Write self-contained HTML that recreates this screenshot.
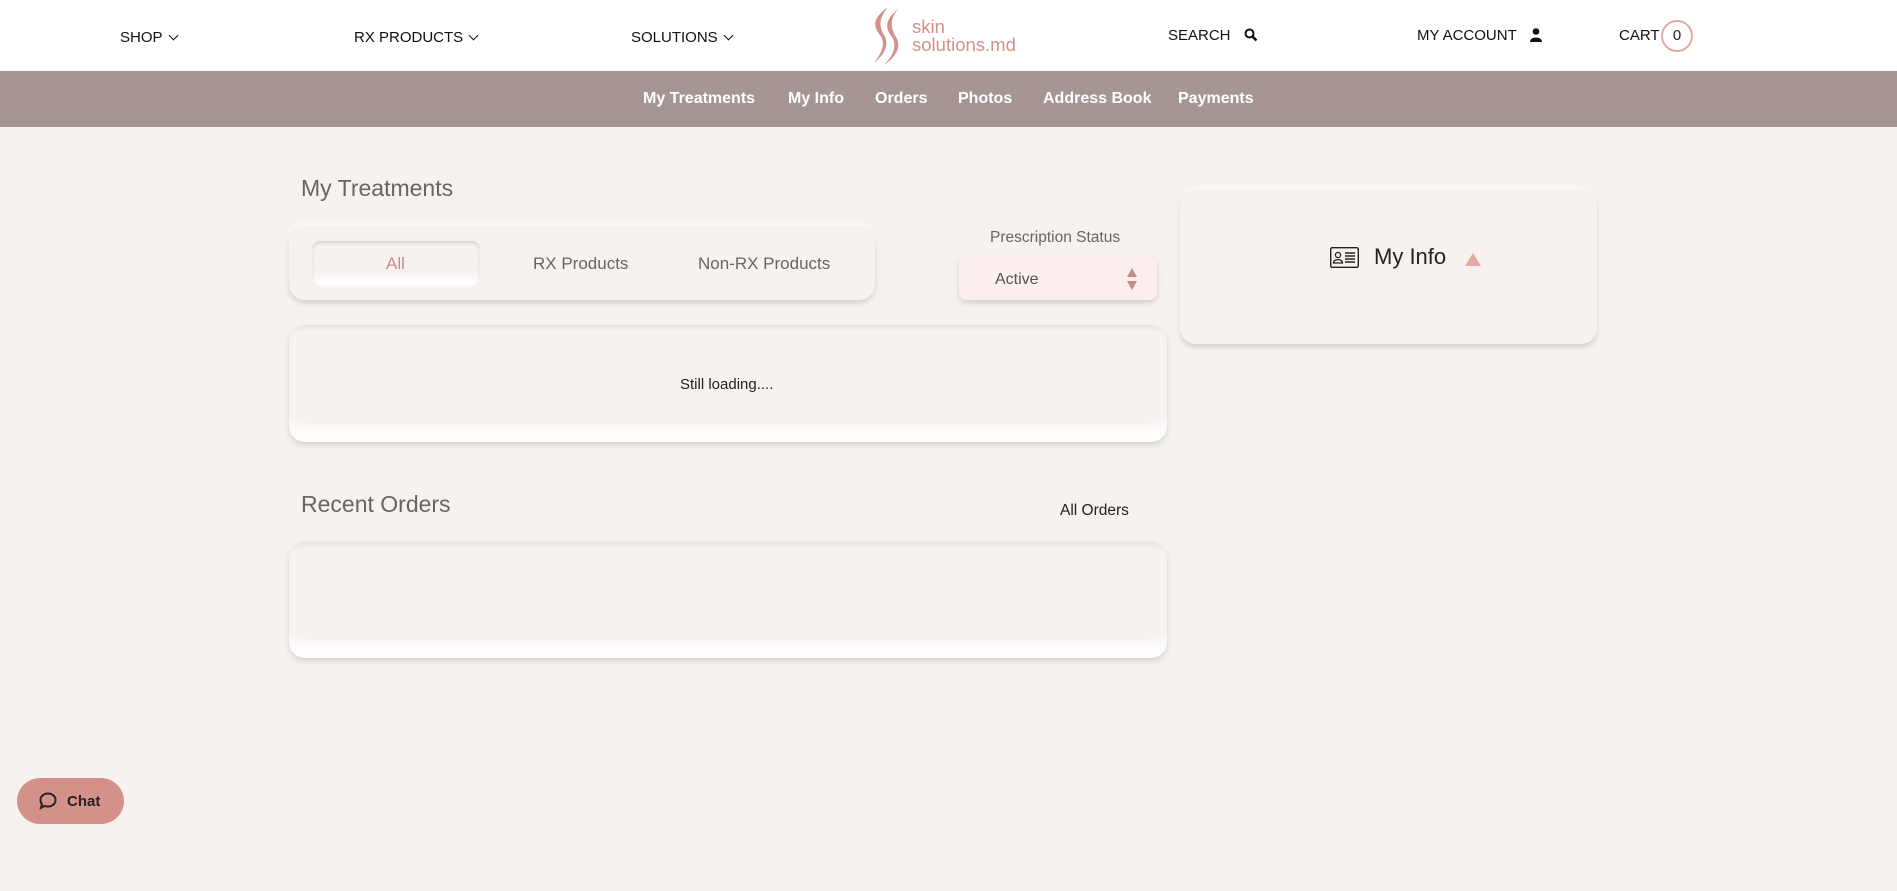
<!DOCTYPE html>
<html><head><meta charset="utf-8"><style>
*{margin:0;padding:0;box-sizing:border-box}
body{width:1897px;height:891px;overflow:hidden;background:#f7f1f0;font-family:"Liberation Sans",sans-serif;position:relative;color:#222}
.a{position:absolute;white-space:nowrap}
.hdr{position:absolute;left:0;top:0;width:1897px;height:71px;background:#fff}
.nav{font-size:15px;color:#111;top:29px}
.sub{position:absolute;left:0;top:71px;width:1897px;height:56px;background:#a69693}
.sub span{position:absolute;top:19px;color:#fff;font-size:16px;font-weight:bold;white-space:nowrap}
.box{position:absolute;border-radius:16px;background:#f7f1f0;box-shadow:0 3px 6px rgba(0,0,0,.13),inset 0 -14px 14px rgba(255,255,255,.9),inset 0 3px 4px rgba(0,0,0,.06)}
.chev{display:inline-block;width:7px;height:7px;border-right:1.8px solid #111;border-bottom:1.8px solid #111;transform:rotate(45deg);margin-left:7px;position:relative;top:-3px}
</style></head><body>
<div class="hdr"></div>
<div class="a nav" style="left:120px">SHOP<span class="chev"></span></div>
<div class="a nav" style="left:354px">RX PRODUCTS<span class="chev"></span></div>
<div class="a nav" style="left:631px">SOLUTIONS<span class="chev"></span></div>
<svg class="a" style="left:866px;top:5px" width="36" height="62" viewBox="0 0 36 62"><path d="M22 2 C8 12 6 20 14 30 C20 38 16 48 8 58 C18 50 24 40 18 30 C12 20 14 12 22 2Z" fill="#d4918a"/><path d="M32 4 C20 14 18 22 26 32 C31 40 28 50 18 60 C30 52 36 42 30 32 C24 22 24 14 32 4Z" fill="#d4918a"/></svg>
<div class="a" style="left:912px;top:18px;font-size:18.5px;color:#d4918a;line-height:18px">skin<br>solutions.md</div>
<div class="a nav" style="left:1168px;top:27px">SEARCH</div>
<svg class="a" style="left:1244px;top:28px" width="14" height="14" viewBox="0 0 14 14"><circle cx="5.5" cy="5.5" r="4" stroke="#111" stroke-width="2" fill="none"/><path d="M8.5 8.5L12.5 12.5" stroke="#111" stroke-width="2.4"/></svg>
<div class="a nav" style="left:1417px;top:27px">MY ACCOUNT</div>
<svg class="a" style="left:1530px;top:28px" width="12" height="14" viewBox="0 0 12 14"><circle cx="6" cy="3.5" r="3.3" fill="#111"/><path d="M0 14 C0 8 12 8 12 14Z" fill="#111"/></svg>
<div class="a nav" style="left:1619px;top:27px">CART</div>
<div class="a" style="left:1661px;top:20px;width:32px;height:32px;border:2px solid #e2aaa5;border-radius:50%;text-align:center;line-height:28px;font-size:15px">0</div>
<div class="sub"><span style="left:643px">My Treatments</span><span style="left:788px">My Info</span><span style="left:875px">Orders</span><span style="left:958px">Photos</span><span style="left:1043px">Address Book</span><span style="left:1178px">Payments</span></div>
<div class="a" style="left:301px;top:175px;font-size:23px;color:#666">My Treatments</div>
<div class="box" style="left:289px;top:226px;width:586px;height:74px;box-shadow:0 3px 6px rgba(0,0,0,.15),0 -3px 8px rgba(255,255,255,.9)"></div>
<div class="box" style="left:312px;top:241px;width:168px;height:45px;border-radius:8px;box-shadow:inset 0 2px 4px rgba(0,0,0,.15),inset 0 -8px 8px #fff"></div>
<div class="a" style="left:386px;top:254px;font-size:17px;color:#c48d87">All</div>
<div class="a" style="left:533px;top:254px;font-size:17px;color:#666">RX Products</div>
<div class="a" style="left:698px;top:254px;font-size:17px;color:#666">Non-RX Products</div>
<div class="a" style="left:990px;top:229px;font-size:15.5px;color:#666">Prescription Status</div>
<div class="box" style="left:959px;top:256px;width:198px;height:44px;border-radius:8px;background:#faefed;box-shadow:0 3px 6px rgba(0,0,0,.15)"></div>
<div class="a" style="left:995px;top:271px;font-size:16px;color:#555">Active</div>
<svg class="a" style="left:1127px;top:268px" width="10" height="22" viewBox="0 0 10 22"><path d="M5 0L10 9H0Z M0 13H10L5 22Z" fill="#c48d87"/></svg>
<div class="box" style="left:289px;top:325px;width:878px;height:117px"></div>
<div class="a" style="left:680px;top:376px;font-size:15px;color:#222">Still loading....</div>
<div class="a" style="left:301px;top:491px;font-size:23px;color:#666">Recent Orders</div>
<div class="a" style="left:1060px;top:502px;font-size:15.5px;color:#222">All Orders</div>
<div class="box" style="left:289px;top:542px;width:878px;height:116px"></div>
<div class="box" style="left:1180px;top:190px;width:417px;height:154px;box-shadow:0 3px 6px rgba(0,0,0,.15),0 -3px 8px rgba(255,255,255,.9)"></div>
<svg class="a" style="left:1330px;top:247px" width="29" height="21" viewBox="0 0 29 21"><rect x="0.7" y="0.7" width="27.6" height="19.6" rx="1.5" fill="none" stroke="#222" stroke-width="1.4"/><circle cx="8" cy="8" r="2.6" fill="none" stroke="#222" stroke-width="1.3"/><path d="M3.5 16 C3.5 11.5 12.5 11.5 12.5 16Z" fill="none" stroke="#222" stroke-width="1.3"/><path d="M15 6H25M15 9H25M15 12H25M15 15H25" stroke="#222" stroke-width="1.4"/></svg>
<div class="a" style="left:1374px;top:244px;font-size:22px;color:#222">My Info</div>
<svg class="a" style="left:1465px;top:253px" width="16" height="13" viewBox="0 0 16 13"><path d="M8 0L16 13H0Z" fill="#e2aaa5"/></svg>
<div class="a" style="left:17px;top:778px;width:107px;height:46px;border-radius:23px;background:#d4918a"></div>
<svg class="a" style="left:38px;top:791px" width="20" height="20" viewBox="0 0 20 20"><path d="M10 2.5C14.5 2.5 17.5 5.3 17.5 9C17.5 12.7 14.5 15.5 10 15.5C8.8 15.5 7.7 15.3 6.8 14.9L3 16.8L4 13.3C3 12.1 2.5 10.7 2.5 9C2.5 5.3 5.5 2.5 10 2.5Z" fill="none" stroke="#222" stroke-width="2"/></svg>
<div class="a" style="left:67px;top:793px;font-size:15px;font-weight:bold;color:#222">Chat</div>
</body></html>
